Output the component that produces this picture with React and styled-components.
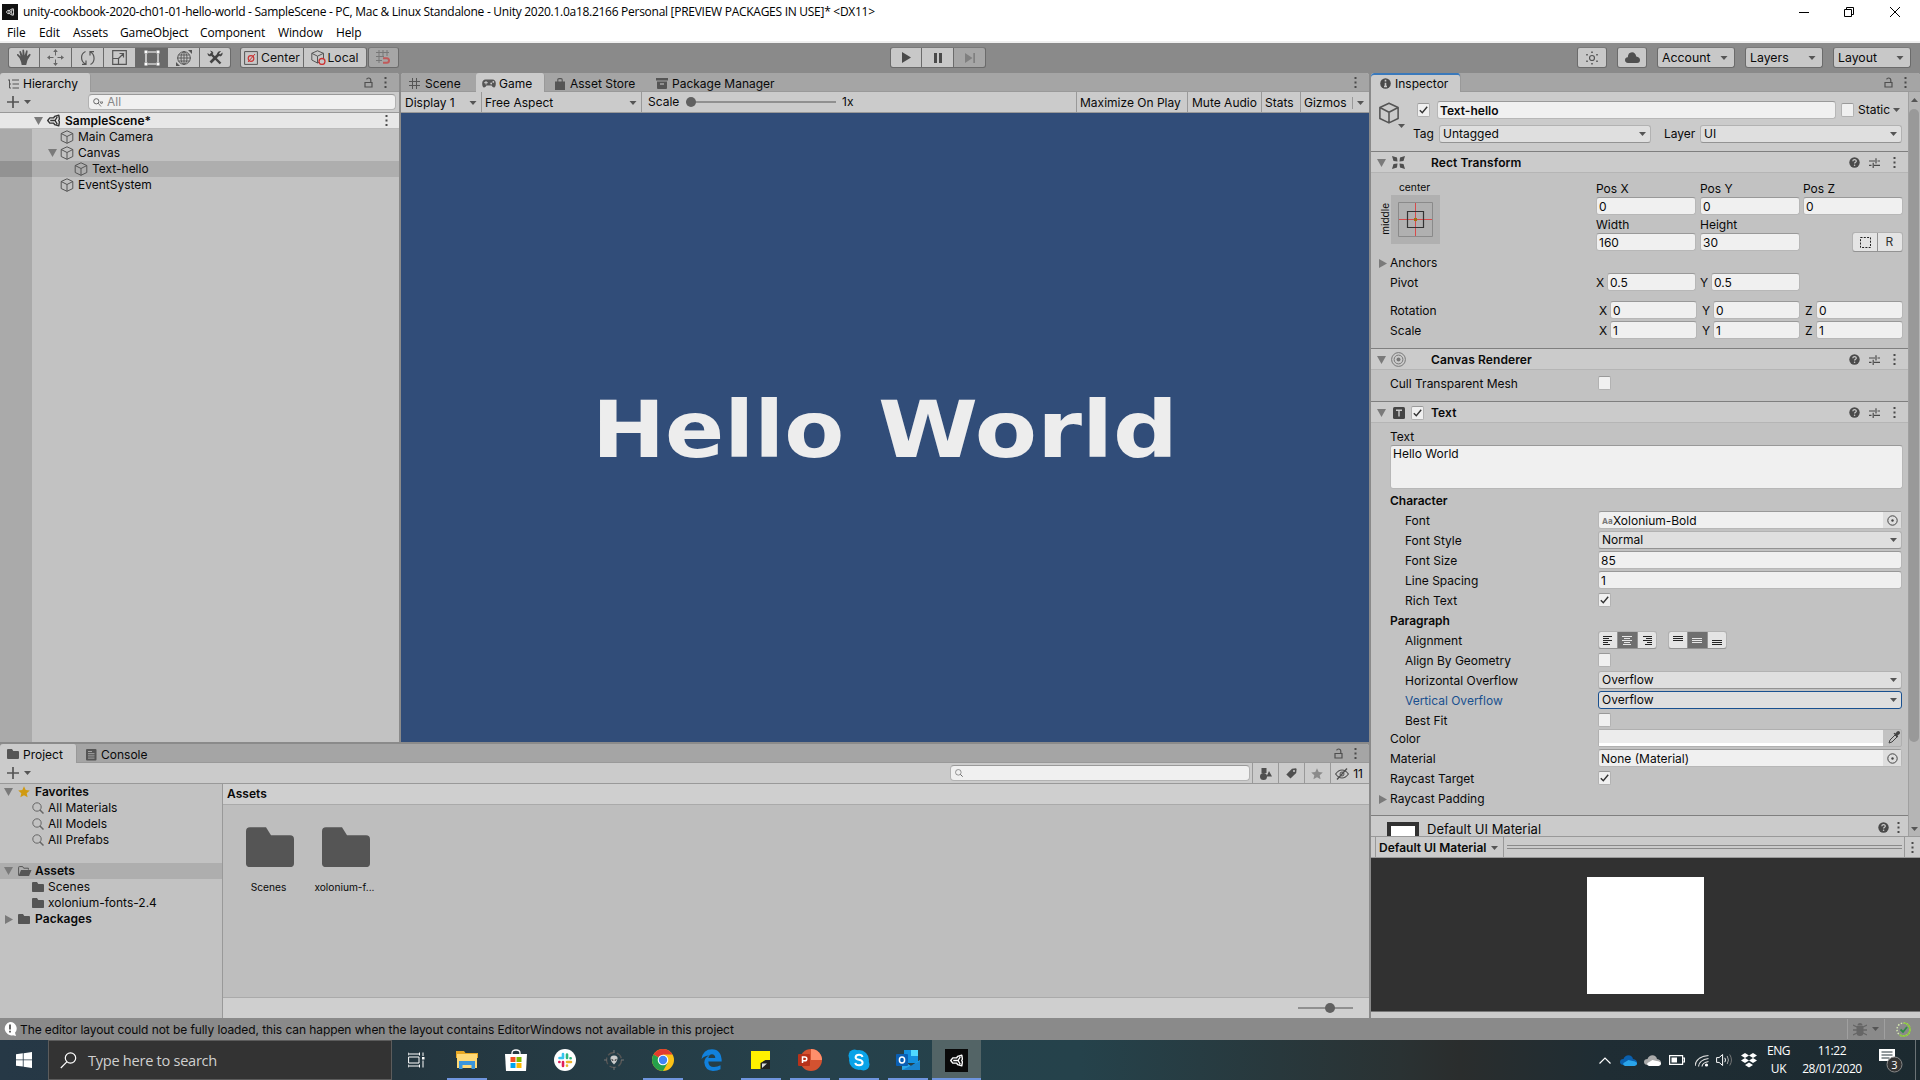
import React from "react";
import styled, { createGlobalStyle, css } from "styled-components";

const Global = createGlobalStyle`
  * { box-sizing: border-box; }
  html, body { margin: 0; padding: 0; overflow: hidden; }
  body { font: 12px/16px Inter, "Liberation Sans", sans-serif; color: #090909; background: #8a8a8a; }
  svg { display: block; flex: none; }
`;

const C = {
  icon: "#555",
  line: "#999",
  bar: "#cbcbcb",
  body: "#c2c2c2",
  dark: "#8a8a8a",
};

/* ---------- layout ---------- */
const Window = styled.div`
  width: 1920px;
  height: 1080px;
  display: flex;
  flex-direction: column;
  overflow: hidden;
  white-space: nowrap;
  cursor: default;
`;
const Row = styled.div`
  display: flex;
  align-items: center;
`;
const Push = styled.div`
  flex: 1;
`;
const Gap = styled.div`
  flex: none;
  width: ${(p) => p.$w}px;
`;
const Space = styled.div`
  flex: none;
  height: ${(p) => p.$h}px;
`;
const Cell = styled.div`
  flex: none;
  width: ${(p) => p.$w}px;
  display: flex;
  align-items: center;
  color: ${(p) => p.$color || "inherit"};
`;

/* ---------- title and menu ---------- */
const TitleBar = styled(Row)`
  height: 22px;
  flex: none;
  padding: 2px 20px 0 2px;
  background: #fff;
  color: #000;
  font-family: "Open Sans", "Noto Sans", sans-serif;
  font-size: 12px;
`;
const TitleText = styled.span`
  margin-left: 5px;
  letter-spacing: -0.275px;
`;
const MenuBar = styled(Row)`
  height: 21px;
  flex: none;
  padding: 2px 0 0 7px;
  background: #fff;
  border-bottom: 2px solid #f0f0f0;
  color: #000;
  font-family: "Open Sans", "Noto Sans", sans-serif;
`;
const MenuItem = styled.span`
  width: ${(p) => p.$w}px;
  letter-spacing: -0.12px;
`;

/* ---------- main toolbar ---------- */
const MainBar = styled(Row)`
  height: 30px;
  flex: none;
  padding: 0 9px 1px 8px;
  background: ${C.dark};
`;
const ButtonGroup = styled.div`
  display: flex;
  height: 21px;
  border: 1px solid #6b6b6b;
  border-top-color: #7a7a7a;
  border-radius: 3px;
  overflow: hidden;
  background: #6b6b6b;
  gap: 1px;
`;
const ToolButton = styled.div`
  width: ${(p) => p.$w}px;
  background: ${(p) => (p.$on ? "#6a6a6a" : p.$off ? "#a6a6a6" : "#c8c8c8")};
  display: flex;
  align-items: center;
  justify-content: center;
  gap: 1px;
  font-size: 12.2px;
  color: #111;
`;
const BarDropdown = styled(Row)`
  width: 78px;
  height: 21px;
  margin-left: 10px;
  padding: 1px 6px 0 4px;
  justify-content: space-between;
  border: 1px solid #6b6b6b;
  border-top-color: #7a7a7a;
  border-radius: 3px;
  background: #c8c8c8;
  font-size: 12.3px;
`;

/* ---------- docks ---------- */
const Workspace = styled.div`
  height: 945px;
  flex: none;
  display: flex;
  gap: 2px;
  background: ${C.dark};
`;
const LeftColumn = styled.div`
  width: 1369px;
  display: flex;
  flex-direction: column;
  gap: 2px;
`;
const TopDocks = styled.div`
  height: 669px;
  display: flex;
  gap: 2px;
`;
const Dock = styled.section`
  width: ${(p) => p.$w}px;
  display: flex;
  flex-direction: column;
  background: ${C.body};
  border-radius: 3px 3px 0 0;
  overflow: hidden;
`;
const TabStrip = styled.div`
  height: 19px;
  flex: none;
  display: flex;
  background: #a5a5a5;
  box-shadow: inset 0 -1px 0 ${C.line};
`;
const Tab = styled.div`
  width: ${(p) => p.$w}px;
  display: flex;
  align-items: center;
  padding: 2px 0 0 ${(p) => p.$pl}px;
  gap: ${(p) => p.$gap || 5}px;
  border-radius: 3px 3px 0 0;
  ${(p) =>
    p.$on &&
    css`
      background: ${C.bar};
      border-right: 1px solid #999;
    `}
  ${(p) =>
    p.$focus &&
    css`
      box-shadow: inset 0 2px 0 #3a79bb;
    `}
`;
const StripIcons = styled.div`
  margin-left: auto;
  display: flex;
  align-items: center;
  gap: 11px;
  padding-right: ${(p) => p.$pr}px;
`;
const DockBar = styled(Row)`
  height: 21px;
  flex: none;
  background: ${C.bar};
  border-bottom: 1px solid ${C.line};
`;
const BarCell = styled(Row)`
  width: ${(p) => p.$w}px;
  height: 20px;
  flex: none;
  padding: 1px ${(p) => p.$pr || 0}px 0 ${(p) => p.$pl || 0}px;
  justify-content: ${(p) => p.$j || "space-between"};
  ${(p) => p.$left && `border-left: 1px solid ${C.line};`}
  ${(p) => p.$right && `border-right: 1px solid ${C.line};`}
`;
const SearchBox = styled(Row)`
  width: ${(p) => p.$w}px;
  height: 16px;
  padding-left: 4px;
  gap: 4px;
  border: 1px solid #b2b2b2;
  border-top-color: #999;
  border-radius: 4px;
  background: #f0f0f0;
  color: #888;
`;
const TreeRow = styled.div`
  height: 16px;
  display: flex;
  align-items: center;
  padding-left: ${(p) => p.$pl}px;
  background: ${(p) => (p.$sel ? "#aeaeae" : "transparent")};
  font-weight: ${(p) => (p.$bold ? 600 : 400)};
  letter-spacing: ${(p) => (p.$bold ? 0.05 : 0)}px;
`;
const Gutter = styled.div`
  width: 32px;
  height: 16px;
  background: ${(p) => (p.$sel ? "#929292" : "#aaa")};
`;
const HierRow = styled.div`
  height: 16px;
  display: flex;
  align-items: center;
  background: ${(p) => (p.$sel ? "#aeaeae" : "transparent")};
`;
const SceneRow = styled(HierRow)`
  padding: 0 11px 0 34px;
  background: #e7e7e7;
  border-bottom: 1px solid #bbb;
  font-weight: 600;
`;
const HierFill = styled.div`
  flex: 1;
  background: linear-gradient(90deg, #aaa 32px, ${C.body} 32px);
`;
const GameView = styled.div`
  flex: 1;
  background: #314d79;
  padding: 272px 0 0 191px;
  display: flex;
  font: 700 78px/90px "DejaVu Sans", sans-serif;
  color: #ededed;
`;
const Word = styled.span`
  display: block;
  width: ${(p) => p.$w}px;
  transform: scaleX(${(p) => p.$sx});
  transform-origin: 0 0;
`;
const Track = styled.div`
  width: ${(p) => p.$w}px;
  height: 2px;
  background: #909090;
  display: flex;
  align-items: center;
  padding-left: ${(p) => p.$at}px;
`;
const Knob = styled.div`
  width: 10px;
  height: 10px;
  flex: none;
  border-radius: 50%;
  background: #606060;
`;

/* ---------- project ---------- */
const ProjectBody = styled.div`
  height: 234px;
  display: flex;
`;
const ProjectTree = styled.div`
  width: 223px;
  border-right: 1px solid ${C.line};
  background: ${C.body};
`;
const AssetPane = styled.div`
  flex: 1;
  display: flex;
  flex-direction: column;
  background: #bebebe;
`;
const AssetHead = styled(Row)`
  height: 21px;
  padding-left: 4px;
  background: #cfcfcf;
  border-bottom: 1px solid #aaa;
  font-weight: 600;
  letter-spacing: 0.05px;
`;
const AssetGrid = styled.div`
  flex: 1;
  display: flex;
  padding: 22px 0 0 9px;
`;
const AssetItem = styled.div`
  width: 76px;
  display: flex;
  flex-direction: column;
  align-items: center;
  gap: 12px;
  font-size: 10.2px;
`;
const AssetName = styled.span`
  padding-right: 3px;
`;
const AssetFoot = styled(Row)`
  height: 21px;
  padding-right: 16px;
  justify-content: flex-end;
  background: #cfcfcf;
  border-top: 1px solid #aaa;
`;

/* ---------- inspector ---------- */
const InspectorMain = styled.div`
  height: 744px;
  display: flex;
  overflow: hidden;
`;
const InspectorBody = styled.div`
  width: 537px;
  display: flex;
  flex-direction: column;
`;
const ScrollBar = styled.div`
  flex: 1;
  display: flex;
  flex-direction: column;
  align-items: center;
  padding: 6px 1px 5px 0;
  background: #b5b5b5;
  border-left: 1px solid #a0a0a0;
`;
const ScrollThumb = styled.div`
  width: 10px;
  height: 633px;
  margin-top: 7px;
  border-radius: 5px;
  background: #999;
`;
const ObjectHead = styled.div`
  height: 59px;
  flex: none;
  display: flex;
  background: ${C.bar};
`;
const ObjectIcon = styled.div`
  width: 42px;
  padding: 10px 0 0 7px;
`;
const ObjectFields = styled.div`
  padding-top: 9px;
  display: flex;
  flex-direction: column;
  gap: 6px;
`;
const Line = styled.div`
  height: ${(p) => p.$h || 18}px;
  flex: none;
  display: flex;
  align-items: center;
  padding-top: ${(p) => p.$pt || 0}px;
`;
const Field = styled.div`
  width: ${(p) => p.$w}px;
  height: ${(p) => p.$h || 18}px;
  flex: none;
  display: flex;
  align-items: ${(p) => (p.$top ? "flex-start" : "center")};
  padding: ${(p) => (p.$top ? 0 : 1)}px 0 0 2px;
  border: 1px solid #b7b7b7;
  border-top-color: #999;
  border-radius: 3px;
  background: #f0f0f0;
  font-weight: ${(p) => (p.$bold ? 600 : 400)};
`;
const Select = styled(Row)`
  width: ${(p) => p.$w}px;
  height: 18px;
  flex: none;
  padding: 0 4px 0 3px;
  justify-content: space-between;
  border: 1px solid #b2b2b2;
  border-bottom-color: #939393;
  border-radius: 3px;
  background: #dfdfdf;
  ${(p) => p.$focus && "border-color: #19508f;"}
`;
const Check = styled.div`
  width: 13px;
  height: 14px;
  flex: none;
  display: flex;
  align-items: center;
  justify-content: center;
  border: 1px solid #b2b2b2;
  border-top-color: #999;
  border-radius: 2px;
  background: #f0f0f0;
`;
const CompHead = styled.div`
  height: 22px;
  flex: none;
  display: flex;
  align-items: center;
  padding: 1px 12px 0 6px;
  background: ${C.bar};
  border-top: 1px solid #7f7f7f;
  border-bottom: 1px solid #b5b5b5;
`;
const CompTitle = styled.span`
  flex: 1;
  font-weight: 600;
  letter-spacing: 0.1px;
`;
const CompIcon = styled.div`
  width: 34px;
  display: flex;
  align-items: center;
  gap: 6px;
  margin-left: ${(p) => p.$ml}px;
`;
const CompBody = styled.div`
  height: ${(p) => p.$h}px;
  flex: none;
  display: flex;
  flex-direction: column;
  padding-top: ${(p) => p.$pt || 0}px;
`;
const RectTop = styled.div`
  height: 73px;
  flex: none;
  display: flex;
`;
const AnchorArea = styled.div`
  width: 225px;
  display: flex;
`;
const MiddleLabel = styled.div`
  width: 20px;
  display: flex;
  padding: 5px 0 0 8px;
  align-items: center;
  justify-content: center;
  span {
    writing-mode: vertical-rl;
    transform: rotate(180deg);
    font-size: 10px;
  }
`;
const AnchorBox = styled.div`
  width: 49px;
  font-size: 10.3px;
  display: flex;
  flex-direction: column;
  align-items: center;
  line-height: 15px;
`;
const AnchorName = styled.span`
  padding-right: 2px;
`;
const RectFields = styled.div`
  display: flex;
  flex-direction: column;
`;
const Segments = styled.div`
  display: flex;
  height: ${(p) => p.$h || 18}px;
  width: ${(p) => p.$w || 59}px;
  gap: 1px;
  border: 1px solid #b2b2b2;
  border-bottom-color: #939393;
  border-radius: 3px;
  background: #939393;
  overflow: hidden;
`;
const Segment = styled.div`
  flex: 1;
  display: flex;
  align-items: center;
  justify-content: center;
  background: ${(p) => (p.$on ? "#6f6f6f" : "#e4e4e4")};
  color: ${(p) => (p.$on ? "#e8e8e8" : "#222")};
`;
const ColorField = styled.div`
  width: 304px;
  height: 18px;
  display: flex;
  align-items: stretch;
  border: 1px solid #b0b0b0;
  border-radius: 2px;
`;
const Prop = styled.div`
  height: ${(p) => p.$h || 20}px;
  flex: none;
  display: flex;
  align-items: center;
  padding: ${(p) => p.$pt || 0}px 0 0 ${(p) => p.$pl}px;
  & > ${Field}, & > ${Select}, & > ${Check}, & > ${Segments}, & > ${ColorField} {
    margin-top: -2px;
  }
`;
const PropName = styled.span`
  width: ${(p) => p.$w}px;
  flex: none;
  font-weight: ${(p) => (p.$bold ? 600 : 400)};
  color: ${(p) => (p.$focus ? "#19508f" : "inherit")};
`;
const Picker = styled.div`
  width: 18px;
  height: 16px;
  margin: -1px 0 0 auto;
  display: flex;
  align-items: center;
  justify-content: center;
  background: #dedede;
`;
const FontGlyph = styled.span`
  width: 12px;
  padding-left: 1px;
  color: #777;
  font-size: 8px;
  font-weight: 700;
`;
const Swatch = styled.div`
  width: 284px;
  background: #ececec;
  border-bottom: 3px solid #fff;
`;
const MaterialHead = styled.div`
  height: 21px;
  flex: none;
  display: flex;
  padding: 6px 8px 0 16px;
  background: ${C.bar};
  border-top: 1px solid #7f7f7f;
  overflow: hidden;
`;
const Thumb = styled.div`
  width: 32px;
  height: 14px;
  border: 4px solid #313131;
  border-bottom: 0;
  background: #fff;
`;
const MaterialName = styled.div`
  flex: 1;
  padding-left: 8px;
  font-size: 13px;
  line-height: 14px;
`;
const PreviewBar = styled(Row)`
  height: 22px;
  flex: none;
  background: ${C.bar};
  border-top: 1px solid ${C.line};
  border-bottom: 1px solid ${C.line};
  padding-left: 4px;
`;
const PreviewTitle = styled(Row)`
  width: 129px;
  height: 20px;
  padding: 1px 5px 0 3px;
  justify-content: space-between;
  border-left: 1px solid ${C.line};
  border-right: 1px solid ${C.line};
  font-weight: 600;
`;
const Grip = styled.div`
  width: 395px;
  height: 4px;
  margin: 0 2px 0 3px;
  border-top: 1px solid #8a8a8a;
  border-bottom: 1px solid #8a8a8a;
`;
const Preview = styled.div`
  height: 154px;
  flex: none;
  display: flex;
  padding: 19px 0 0 216px;
  background: #313131;
  border-bottom: 1px solid #777;
`;
const PreviewQuad = styled.div`
  width: 117px;
  height: 117px;
  background: #fff;
`;
const PreviewFoot = styled.div`
  flex: 1;
  background: ${C.bar};
`;

/* ---------- status and taskbar ---------- */
const StatusBar = styled(Row)`
  height: 22px;
  flex: none;
  padding: 0 9px 0 3px;
  background: ${C.dark};
`;
const StatusText = styled.span`
  padding-top: 2px;
  letter-spacing: -0.085px;
`;
const StatusSep = styled.div`
  width: 1px;
  height: 20px;
  background: #a0a0a0;
`;
const TaskBar = styled(Row)`
  height: 40px;
  flex: none;
  background: linear-gradient(90deg, #263846 0, #24363f 400px, #26414b 800px, #25424b 1080px, #2a3233 1400px, #2a2d2d 1460px, #1f2d34 1600px, #1c2a30 1920px);
  color: #fff;
  font-family: "Open Sans", "Noto Sans", sans-serif;
  font-size: 12px;
`;
const StartButton = styled(Row)`
  width: 48px;
  height: 40px;
  justify-content: center;
`;
const SearchTask = styled(Row)`
  width: 344px;
  height: 40px;
  padding-left: 11px;
  gap: 11px;
  background: #333;
  border: 1px solid #5c5c5c;
  color: #d0d0d0;
  font-size: 14.6px;
  letter-spacing: -0.28px;
`;
const TaskItem = styled.div`
  width: 49px;
  height: 40px;
  flex: none;
  display: flex;
  align-items: center;
  justify-content: center;
  background: ${(p) => (p.$on ? "#536466" : "transparent")};
  ${(p) => p.$run && "background: linear-gradient(#6f95de, #6f95de) center bottom / 40px 2px no-repeat;"}
  ${(p) => p.$on && "box-shadow: inset 0 -2px 0 #6f95de;"}
`;
const Tray = styled(Row)`
  margin-left: auto;
`;
const TrayText = styled.div`
  width: ${(p) => p.$w}px;
  text-align: center;
  line-height: 18px;
  font-size: 12px;
  letter-spacing: -0.4px;
`;
const TrayEnd = styled.div`
  width: 1px;
  height: 40px;
  margin-right: 4px;
  background: #6b7376;
`;

/* ---------- drawings ---------- */
const S = ({ w = 16, h = w, vb, children, ...r }) => (
  <svg width={w} height={h} viewBox={vb || `0 0 ${w} ${h}`} fill="none" {...r}>
    {children}
  </svg>
);
const Down = ({ c = "#555", w = 7 }) => (
  <S w={w} h={4} vb="0 0 7 4"><path d="M0 0h7L3.5 4z" fill={c} /></S>
);
const Open = () => <S w={9} h={8}><path d="M0 0h9L4.5 8z" fill="#7a7a7a" /></S>;
const Closed = () => <S w={8} h={9}><path d="M0 0v9l8-4.500z" fill="#7a7a7a" /></S>;
const Dots = ({ c = "#4a4a4a" }) => (
  <S w={3} h={11}><path d="M.5 0h2v2h-2zM.5 4.500h2v2h-2zM.5 9h2v2h-2z" fill={c} /></S>
);
const Lock = () => (
  <S w={9} h={11}><path d="M1 5.500h7v4.500H1zM6.800 5.500V3.200C6.800 1.800 6 1 4.600 1 3.500 1 2.800 1.500 2.600 2.300" stroke="#4f4f4f" strokeWidth="1.200" /></S>
);
const Cube = ({ s = 14, c = "#555" }) => (
  <S w={s} vb="0 0 14 14"><path d="M7 .8 12.800 3.500v7L7 13.300 1.200 10.500v-7zM1.200 3.500 7 6.500l5.800-3M7 6.500v6.800" stroke={c} strokeWidth="1" strokeLinejoin="round" /></S>
);
const Plus = () => <S w={12}><path d="M6 0v12M0 6h12" stroke="#555" strokeWidth="1.700" /></S>;
const Mag = ({ s = 12, c = "#666" }) => (
  <S w={s} vb="0 0 12 12"><circle cx="5" cy="5" r="4.200" stroke={c} /><path d="M8 8l3.500 3.500" stroke={c} strokeWidth="1.500" /></S>
);
const Unity = ({ s = 13, c = "#333", ...r }) => (
  <S w={s} vb="0 0 14 14" {...r}>
    <path d="M12.700 1.300 8.200 2.500 7.200 4.200 3 4.200.8 7 3 9.800h4.200l1 1.700 4.500 1.200L13.400 8.500 12.600 7l.8-1.500zM3.500 7h5.200M8.700 7l2.300-3.800M8.700 7l2.300 3.800" stroke={c} strokeWidth="1.500" strokeLinejoin="round" />
  </S>
);
const Folder = ({ s = 12 }) => (
  <S w={s} h={s * 0.84} vb="0 0 48 40"><path d="M0 4Q0 0 4 0h16l5 8h19q4 0 4 4v24q0 4-4 4H4q-4 0-4-4z" fill="#555" /></S>
);
const Tick = () => <S w={9} h={8}><path d="M.8 4.200 3.300 6.800 8.200.8" stroke="#333" strokeWidth="1.400" /></S>;
const Star = ({ s = 12, c }) => (
  <S w={s} vb="0 0 12 12"><path d="M6 .3l1.700 3.800 4.100.4-3.100 2.700.9 4.100L6 9.200l-3.600 2.100.9-4.100L.2 4.500l4.100-.4z" fill={c} /></S>
);
const Help = () => (
  <S w={11}><circle cx="5.500" cy="5.500" r="5.200" fill="#4a4a4a" /><path d="M3.800 4.200c0-2 3.500-2 3.500 0 0 1.100-1.700 1.200-1.700 2.400" stroke="#cbcbcb" strokeWidth="1.200" /><circle cx="5.600" cy="8.300" r=".8" fill="#cbcbcb" /></S>
);
const Preset = () => (
  <S w={11} h={10}><path d="M0 3h6M8.500 3H11M7 .3v5.200M0 7.300h2.500M5 7.300h6M4.200 4.800V10" stroke="#4a4a4a" strokeWidth="1.200" /></S>
);
const Target = () => <S w={11}><circle cx="5.500" cy="5.500" r="4.700" stroke="#444" /><circle cx="5.500" cy="5.500" r="1.200" fill="#444" /></S>;

const Hand = () => (
  <S w={16} h={17}><path d="M3.500 9 1.200 6.400q-.7-1 .3-1.400.6-.2 1.200.5L4.500 7.600 3.400 3q0-1 .7-1.100.8-.1 1 .8L6.500 6.500 6.400 1.300q.1-.9.8-.9t.9.9L8.700 6.400 10 2q.4-.9 1-.7.8.2.6 1.200L10.900 7.300 13 5.200q.7-.7 1.300-.2.6.6 0 1.400L11.500 11q-.6 2.500-1.300 5H5.700q-.3-3-2.200-7z" fill="#555" /></S>
);
const Move = () => (
  <S w={17}><path d="M8.500 0l2.300 3H6.200zM8.500 17l2.300-3H6.200zM0 8.500l3-2.300v4.600zM17 8.500l-3-2.300v4.600z" fill="#666" /><path d="M8.500 3v3.500M8.500 10.500V14M3 8.500h3.500M10.500 8.500H14" stroke="#666" /></S>
);
const Rotate = () => (
  <S w={16}><path d="M5.500 1.500C0 4 .5 11.500 5.500 14M10.500 14.500C15.500 12 15 4.500 10.500 2M2 14.400h4v-4M14 1.600h-4v4" stroke="#555" strokeWidth="1.200" /></S>
);
const ScaleIcon = () => (
  <S w={15}><path d="M.7.7h13.600v13.600H.7zM.7 8.500h5.800v5.800M6.500 8.500 11.500 3.500M7.500 3.500h4v4" stroke="#555" strokeWidth="1.200" /></S>
);
const RectIcon = () => (
  <S w={16}><path d="M2 4v8M14 4v8M4 2h8M4 14h8" stroke="#fff" strokeWidth="1.200" /><path d="M.5.500h3v3h-3zM12.500.500h3v3h-3zM.5 12.500h3v3h-3zM12.500 12.500h3v3h-3z" fill="#fff" /></S>
);
const Transform = () => (
  <S w={16}><circle cx="8" cy="8" r="6.300" stroke="#555" /><ellipse cx="8" cy="8" rx="3" ry="6.300" stroke="#555" strokeWidth=".9" /><path d="M1 8h14M8 1v14M2.500 5h11M2.500 11h11" stroke="#555" strokeWidth=".9" /><path d="M0 16v-4l4 4zM16 0v4l-4-4z" fill="#555" /></S>
);
const Tools = () => (
  <S w={16}><path d="M3.500 12.500 12 4" stroke="#444" strokeWidth="2.600" /><path d="M3.500 3.500 13.500 13.500" stroke="#444" strokeWidth="2.400" /><path d="M10 3.500q1-3 4-2.500l-2 2.500 1 1 2.500-2q.5 3-2.500 4zM6.500 3q-1-2.500-3.500-2.500l1.500 2.200-1.800 1.800L.5 3Q.5 6 3.200 6.500z" fill="#444" /></S>
);
const PivotIcon = () => (
  <S w={14}><path d="M.6.6h12.800v12.800H.6z" stroke="#555" /><circle cx="7" cy="7.500" r="2.800" stroke="#c33" strokeWidth="1.200" /><path d="M4 11 11 3" stroke="#c33" /></S>
);
const LocalIcon = () => (
  <S w={15}><path d="M6.500.8 12.500 3.300v6.500L6.500 13 .8 10V3.300zM.8 3.300l5.700 2.900 6-2.900M6.500 6.200V13" stroke="#555" /><circle cx="11" cy="11.500" r="3" fill="#c8c8c8" stroke="#c33" strokeWidth="1.300" /></S>
);
const SnapIcon = () => (
  <S w={15}><path d="M3 0v13M7 0v7M11 0v6M0 2.500h13M0 6.500h8M0 10.500h6" stroke="#777" /><path d="M7 8.200h3.700q2.300.1 2.300 2.300 0 2.200-2.300 2.300H7" stroke="#c05a5a" strokeWidth="2" /></S>
);
const FolderOpen = () => (
  <S w={14} h={11}><path d="M.6 9.500V1.400Q.6.600 1.400.6h3.300l1 1.600h4.700v1.500" stroke="#555" /><path d="M3 4h10.500L11 10H.6z" fill="#555" /></S>
);

const tabs = {
  hier: <S w={11} h={10}><path d="M0 1h2M4 1h7M1.500 1v8M1.500 5H3M4.500 5H11M1.500 9H3M4.500 9H11" stroke="#555" /></S>,
  scene: <S w={11}><path d="M3.500 0v11M7.500 0v11M0 3.500h11M0 7.500h11" stroke="#555" /></S>,
  game: <S w={14} h={9}><path d="M3.500.5h7q3.300.3 3.300 4T12 8.500Q10.500 8.500 9.500 6.500h-5Q3.500 8.500 2 8.500.2 8.200.2 4.500T3.500.5z" fill="#555" /><path d="M4 2v3.500M2.200 3.700h3.600" stroke="#cbcbcb" /><circle cx="9.200" cy="4.500" r=".9" fill="#cbcbcb" /><circle cx="11.300" cy="2.900" r=".9" fill="#cbcbcb" /></S>,
  store: <S w={10} h={12}><path d="M0 3.500h10V12H0z" fill="#555" /><path d="M2.800 5V1.800q0-1.200 1.200-1.200h2q1.200 0 1.200 1.200V5" stroke="#555" strokeWidth="1.100" /></S>,
  pack: <S w={12} h={11}><path d="M0 0h12v2.600H0z" fill="#555" /><path d="M1 3.500h10V10q0 1-1 1H2q-1 0-1-1z" fill="#555" /><path d="M4 6h4" stroke="#a5a5a5" strokeWidth="1.300" /></S>,
  console: <S w={11} h={12}><rect width="10.500" height="11.500" rx="1" fill="#555" /><path d="M2 2.500h4M2 4.700h6.500M2 6.900h6.500M2 9.100h6.500" stroke="#a5a5a5" /></S>,
  info: <S w={11}><circle cx="5.500" cy="5.500" r="5.300" fill="#4a4a4a" /><path d="M5.500 1.800v1.700M5.500 4.700v4M4 8.500h3" stroke="#cbcbcb" strokeWidth="1.600" /></S>,
};

/* ---------- panels ---------- */
const Toolbar = () => (
  <MainBar>
    <ButtonGroup>
      <ToolButton $w={30}><Hand /></ToolButton>
      <ToolButton $w={31}><Move /></ToolButton>
      <ToolButton $w={31}><Rotate /></ToolButton>
      <ToolButton $w={31}><ScaleIcon /></ToolButton>
      <ToolButton $w={31} $on><RectIcon /></ToolButton>
      <ToolButton $w={31}><Transform /></ToolButton>
      <ToolButton $w={30}><Tools /></ToolButton>
    </ButtonGroup>
    <Gap $w={9} />
    <ButtonGroup>
      <ToolButton $w={62}><PivotIcon /><Gap $w={1} />Center</ToolButton>
      <ToolButton $w={62}><LocalIcon />Local</ToolButton>
    </ButtonGroup>
    <Gap $w={1} />
    <ButtonGroup><ToolButton $w={29} $off><SnapIcon /></ToolButton></ButtonGroup>
    <Gap $w={491} />
    <ButtonGroup>
      <ToolButton $w={30}><S w={9} h={11}><path d="M0 0l9 5.500L0 11z" fill="#4a4a4a" /></S></ToolButton>
      <ToolButton $w={31}><S w={8} h={10}><path d="M0 0h3v10H0zM5 0h3v10H5z" fill="#4a4a4a" /></S></ToolButton>
      <ToolButton $w={31} $off><S w={10} h={10}><path d="M0 0l7.500 5L0 10zM8.300 0H10v10H8.300z" fill="#808080" /></S></ToolButton>
    </ButtonGroup>
    <Push />
    <ButtonGroup>
      <ToolButton $w={28}>
        <S w={14}><circle cx="7" cy="7" r="2.500" stroke="#555" strokeWidth="1.200" /><path d="M6.200.5h1.600v1.600H6.200zM6.200 12h1.600v1.600H6.200zM1.200 3h1.600v1.600H1.200zM11.200 3h1.600v1.600h-1.600zM1.200 9.400h1.600V11H1.200zM11.200 9.400h1.600V11h-1.600z" fill="#555" /></S>
      </ToolButton>
    </ButtonGroup>
    <Gap $w={10} />
    <ButtonGroup>
      <ToolButton $w={28}>
        <S w={15} h={11}><path d="M3 11q-3-.4-3-3t2.800-2.800Q3 .4 7 .2q3.600.2 4.200 4.200Q15 5 15 8t-3 3z" fill="#4f4f4f" /></S>
      </ToolButton>
    </ButtonGroup>
    {["Account", "Layers", "Layout"].map((t) => (
      <BarDropdown key={t}>{t}<Down w={8} /></BarDropdown>
    ))}
  </MainBar>
);

const Hierarchy = () => (
  <Dock $w={399}>
    <TabStrip>
      <Tab $w={91} $pl={8} $gap={4} $on>{tabs.hier}Hierarchy</Tab>
      <StripIcons $pr={12}><Lock /><Dots /></StripIcons>
    </TabStrip>
    <DockBar>
      <Gap $w={7} /><Plus /><Gap $w={5} /><Down /><Gap $w={57} />
      <SearchBox $w={308}><S w={10} h={9}><circle cx="3.300" cy="3.300" r="2.600" stroke="#666" /><path d="M5 5l3 3.500M7 4h3l-1.500 2z" stroke="#666" strokeWidth=".8" /></S>All</SearchBox>
    </DockBar>
    <SceneRow><Open /><Gap $w={4} /><Unity /><Gap $w={5} />SampleScene*<Push /><Dots /></SceneRow>
    <HierRow><Gutter /><Gap $w={28} /><Cube /><Gap $w={4} />Main Camera</HierRow>
    <HierRow><Gutter /><Gap $w={16} /><Open /><Gap $w={3} /><Cube /><Gap $w={4} />Canvas</HierRow>
    <HierRow $sel><Gutter $sel /><Gap $w={42} /><Cube /><Gap $w={4} />Text-hello</HierRow>
    <HierRow><Gutter /><Gap $w={28} /><Cube /><Gap $w={4} />EventSystem</HierRow>
    <HierFill />
  </Dock>
);

const Game = () => (
  <Dock $w={968}>
    <TabStrip>
      <Tab $w={75} $pl={8} $gap={5}>{tabs.scene}Scene</Tab>
      <Tab $w={69} $pl={6} $gap={3} $on>{tabs.game}Game</Tab>
      <Tab $w={102} $pl={10}>{tabs.store}Asset Store</Tab>
      <Tab $w={130} $pl={9} $gap={4}>{tabs.pack}Package Manager</Tab>
      <StripIcons $pr={12}><Dots /></StripIcons>
    </TabStrip>
    <DockBar>
      <BarCell $w={81} $pl={4} $pr={4} $right>Display 1<Down w={8} /></BarCell>
      <BarCell $w={160} $pl={3} $pr={4} $right>Free Aspect<Down w={8} /></BarCell>
      <Gap $w={6} /><Cell $w={38}>Scale</Cell>
      <Track $w={150} $at={0}><Knob /></Track><Gap $w={6} />1x
      <Push />
      <BarCell $w={111} $pl={3} $left>Maximize On Play</BarCell>
      <BarCell $w={74} $pl={4} $left>Mute Audio</BarCell>
      <BarCell $w={39} $pl={3} $left>Stats</BarCell>
      <BarCell $w={69} $pl={3} $pr={5} $left>Gizmos<S w={12} h={12}><path d="M.5 0v12" stroke="#999" /><path d="M5 4h7l-3.500 4z" fill="#555" /></S></BarCell>
    </DockBar>
    <GameView><Word $w={286} $sx={1.12}>Hello</Word><Word $w={300} $sx={1.163}>World</Word></GameView>
  </Dock>
);

const Project = () => (
  <Dock $w={1369}>
    <TabStrip>
      <Tab $w={77} $pl={7} $gap={4} $on><Folder />Project</Tab>
      <Tab $w={90} $pl={9} $gap={4}>{tabs.console}Console</Tab>
      <StripIcons $pr={12}><Lock /><Dots /></StripIcons>
    </TabStrip>
    <DockBar>
      <Gap $w={7} /><Plus /><Gap $w={5} /><Down /><Gap $w={919} />
      <SearchBox $w={300}><Mag s={8} /></SearchBox>
      <Push />
      <BarCell $w={26} $j="center" $left>
        <S w={12}><path d="M1.500 0h5v5h-5zM9 3l3 5.500H6.500z" fill="#4f4f4f" /><circle cx="3.500" cy="8.500" r="3.500" fill="#4f4f4f" /></S>
      </BarCell>
      <BarCell $w={26} $j="center" $pr={1} $left>
        <S w={11}><path d="M6 .8 10 .3l.6.6-.4 4L4.500 10.500.3 6.500z" fill="#4f4f4f" /><circle cx="8" cy="3" r="1" fill="#cbcbcb" /></S>
      </BarCell>
      <BarCell $w={26} $j="center" $pr={1} $left><Star c="#8b8b8b" /></BarCell>
      <BarCell $w={39} $pl={4} $pr={6} $left>
        <S w={14} h={12}><path d="M.6 6Q3.500 2 7 2t6.400 4Q10.500 10 7 10T.6 6z" stroke="#4f4f4f" strokeWidth="1.200" /><circle cx="7" cy="6" r="2" stroke="#4f4f4f" /><path d="M2 11.500 12 .5" stroke="#4f4f4f" strokeWidth="1.400" /></S>11
      </BarCell>
    </DockBar>
    <ProjectBody>
      <ProjectTree>
        <TreeRow $pl={4} $bold><Open /><Gap $w={5} /><Star c="#d09a10" /><Gap $w={5} />Favorites</TreeRow>
        {["All Materials", "All Models", "All Prefabs"].map((t) => (
          <TreeRow key={t} $pl={32}><Mag /><Gap $w={4} />{t}</TreeRow>
        ))}
        <Space $h={15} />
        <TreeRow $pl={4} $bold $sel><Open /><Gap $w={5} /><FolderOpen /><Gap $w={3} />Assets</TreeRow>
        <TreeRow $pl={32}><Folder /><Gap $w={4} />Scenes</TreeRow>
        <TreeRow $pl={32}><Folder /><Gap $w={4} />xolonium-fonts-2.4</TreeRow>
        <TreeRow $pl={5} $bold><Closed /><Gap $w={5} /><Folder /><Gap $w={5} />Packages</TreeRow>
      </ProjectTree>
      <AssetPane>
        <AssetHead>Assets</AssetHead>
        <AssetGrid>
          <AssetItem><Folder s={48} /><AssetName>Scenes</AssetName></AssetItem>
          <AssetItem><Folder s={48} /><AssetName>xolonium-f...</AssetName></AssetItem>
        </AssetGrid>
        <AssetFoot><Track $w={55} $at={27}><Knob /></Track></AssetFoot>
      </AssetPane>
    </ProjectBody>
  </Dock>
);

const HeadIcons = () => (<><Help /><Gap $w={9} /><Preset /><Gap $w={13} /><Dots /></>);
const Align = ({ rows }) => (
  <S w={10} h={11}><path d={rows} stroke="currentColor" strokeWidth="1" /></S>
);

const Inspector = () => (
  <Dock $w={549}>
    <TabStrip>
      <Tab $w={90} $pl={9} $gap={4} $on $focus>{tabs.info}Inspector</Tab>
      <StripIcons $pr={13}><Lock /><Dots /></StripIcons>
    </TabStrip>
    <InspectorMain>
      <InspectorBody>
        <ObjectHead>
          <ObjectIcon>
            <Cube s={22} />
            <Row><Gap $w={20} /><Down /></Row>
          </ObjectIcon>
          <ObjectFields>
            <Line><Gap $w={4} /><Check><Tick /></Check><Gap $w={7} /><Field $w={399} $bold>Text-hello</Field><Gap $w={5} /><Check /><Gap $w={4} /><Cell $w={35}>Static</Cell><Down /></Line>
            <Line><Cell $w={26}>Tag</Cell><Select $w={212}>Untagged<Down /></Select><Gap $w={13} /><Cell $w={36}>Layer</Cell><Select $w={202}>UI<Down /></Select></Line>
          </ObjectFields>
        </ObjectHead>

        <CompHead>
          <Open />
          <CompIcon $ml={6}><S w={13}><path d="M0 0l5 1.500L5.500 5.500 1.500 5zM13 0 8 1.500 7.500 5.500l4-.5zM0 13l5-1.500.5-4-4 .5zM13 13l-5-1.500-.5-4 4 .5z" fill="#4f4f4f" /></S></CompIcon>
          <Gap $w={5} /><CompTitle>Rect Transform</CompTitle><HeadIcons />
        </CompHead>
        <CompBody $h={175} $pt={7}>
          <RectTop>
            <AnchorArea>
              <MiddleLabel><span>middle</span></MiddleLabel>
              <AnchorBox>
                <AnchorName>center</AnchorName>
                <S w={49} h={49}>
                  <path d="M0 0h49v49H0z" fill="#b0b0b0" />
                  <path d="M7.500 7.500h34v34h-34z" stroke="#8a8a8a" />
                  <path d="M24.500 8v33M8 24.500h33" stroke="#d84a4a" />
                  <path d="M16.500 16.500h16v16h-16z" stroke="#333" strokeWidth="1.200" />
                  <path d="M23 23h3v3h-3z" fill="#a07010" />
                </S>
              </AnchorBox>
            </AnchorArea>
            <RectFields>
              <Line $h={17}><Cell $w={104}>Pos X</Cell><Cell $w={103}>Pos Y</Cell><Cell $w={60}>Pos Z</Cell></Line>
              <Line><Field $w={100}>0</Field><Gap $w={4} /><Field $w={100}>0</Field><Gap $w={3} /><Field $w={100}>0</Field></Line>
              <Line $h={18} $pt={2}><Cell $w={104}>Width</Cell><Cell $w={103}>Height</Cell></Line>
              <Line>
                <Field $w={100}>160</Field><Gap $w={4} /><Field $w={100}>30</Field><Gap $w={52} />
                <Segments $w={51} $h={20}>
                  <Segment><S w={11}><path d="M.5.500h10v10H.5z" stroke="#222" strokeDasharray="2 1.300" /></S></Segment>
                  <Segment><Cell $w={9} $color="#333">R</Cell></Segment>
                </Segments>
              </Line>
            </RectFields>
          </RectTop>
          <Prop $pl={8}><Closed /><Gap $w={3} />Anchors</Prop>
          <Prop $pl={19}><PropName $w={206}>Pivot</PropName><Cell $w={11}>X</Cell><Field $w={89}>0.5</Field><Gap $w={4} /><Cell $w={11}>Y</Cell><Field $w={89}>0.5</Field></Prop>
          <Space $h={8} />
          {[["Rotation", "0"], ["Scale", "1"]].map(([n, v]) => (
            <Prop key={n} $pl={19}>
              <PropName $w={209}>{n}</PropName>
              <Cell $w={11}>X</Cell><Field $w={87}>{v}</Field><Gap $w={5} />
              <Cell $w={11}>Y</Cell><Field $w={87}>{v}</Field><Gap $w={5} />
              <Cell $w={11}>Z</Cell><Field $w={87}>{v}</Field>
            </Prop>
          ))}
        </CompBody>

        <CompHead>
          <Open />
          <CompIcon $ml={5}><S w={15}><circle cx="7.500" cy="7.500" r="6.900" stroke="#777" /><circle cx="7.500" cy="7.500" r="4.400" stroke="#777" /><circle cx="7.500" cy="7.500" r="2" fill="#777" /></S></CompIcon>
          <Gap $w={6} /><CompTitle>Canvas Renderer</CompTitle><HeadIcons />
        </CompHead>
        <CompBody $h={31} $pt={4}>
          <Prop $pl={19}><PropName $w={208}>Cull Transparent Mesh</PropName><Check /></Prop>
        </CompBody>

        <CompHead>
          <Open />
          <CompIcon $ml={7}>
            <S w={12}><rect width="12" height="12" rx="1.500" fill="#444" /><path d="M3 3.200h6M6 3.200v6.300" stroke="#cbcbcb" strokeWidth="1.400" /></S>
            <Check><Tick /></Check>
          </CompIcon>
          <Gap $w={4} /><CompTitle>Text</CompTitle><HeadIcons />
        </CompHead>
        <CompBody $h={392} $pt={4}>
          <Prop $pl={19} $h={18} $pt={2}>Text</Prop>
          <Line $h={44}><Gap $w={19} /><Field $w={513} $h={44} $top>Hello World</Field></Line>
          <Space $h={2} />
          <Prop $pl={19}><PropName $bold>Character</PropName></Prop>
          <Prop $pl={34}>
            <PropName $w={193}>Font</PropName>
            <Field $w={304}><FontGlyph>Aa</FontGlyph>Xolonium-Bold<Picker><Target /></Picker></Field>
          </Prop>
          <Prop $pl={34}><PropName $w={193}>Font Style</PropName><Select $w={304}>Normal<Down /></Select></Prop>
          <Prop $pl={34}><PropName $w={193}>Font Size</PropName><Field $w={304}>85</Field></Prop>
          <Prop $pl={34}><PropName $w={193}>Line Spacing</PropName><Field $w={304}>1</Field></Prop>
          <Prop $pl={34}><PropName $w={193}>Rich Text</PropName><Check><Tick /></Check></Prop>
          <Prop $pl={19}><PropName $bold>Paragraph</PropName></Prop>
          <Prop $pl={34}>
            <PropName $w={193}>Alignment</PropName>
            <Segments>
              <Segment><Align rows="M0 1.500h9M0 3.500h6M0 5.500h9M0 7.500h5M0 9.500h7" /></Segment>
              <Segment $on><Align rows="M0 1.500h10M2 3.500h6M0 5.500h10M2 7.500h6M1 9.500h8" /></Segment>
              <Segment><Align rows="M1 1.500h9M4 3.500h6M1 5.500h9M5 7.500h5M3 9.500h7" /></Segment>
            </Segments>
            <Gap $w={11} />
            <Segments>
              <Segment><Align rows="M0 1.500h10M0 3.500h10M0 5.500h10" /></Segment>
              <Segment $on><Align rows="M0 3.500h10M0 5.500h10M0 7.500h10" /></Segment>
              <Segment><Align rows="M0 5.500h10M0 7.500h10M0 9.500h10" /></Segment>
            </Segments>
          </Prop>
          <Prop $pl={34}><PropName $w={193}>Align By Geometry</PropName><Check /></Prop>
          <Prop $pl={34}><PropName $w={193}>Horizontal Overflow</PropName><Select $w={304}>Overflow<Down /></Select></Prop>
          <Prop $pl={34}><PropName $w={193} $focus>Vertical Overflow</PropName><Select $w={304} $focus>Overflow<Down /></Select></Prop>
          <Prop $pl={34} $h={18} $pt={2}><PropName $w={193}>Best Fit</PropName><Check /></Prop>
          <Prop $pl={19}>
            <PropName $w={208}>Color</PropName>
            <ColorField><Swatch /><Gap $w={5} /><S w={12} h={14}><path d="M1 13l1-3 5-5 2 2-5 5z" stroke="#444" /><path d="M5.500 3.500 6.500 2.800l1 .7 1.500-2q1.500-1.200 2.500 0t0 2.500l-2 1.500.7 1-.7 1z" fill="#444" /></S></ColorField>
          </Prop>
          <Prop $pl={19}><PropName $w={208}>Material</PropName><Field $w={304}>None (Material)<Picker><Target /></Picker></Field></Prop>
          <Prop $pl={19}><PropName $w={208}>Raycast Target</PropName><Check><Tick /></Check></Prop>
          <Prop $pl={8}><Closed /><Gap $w={3} />Raycast Padding</Prop>
        </CompBody>
        <MaterialHead><Thumb /><MaterialName>Default UI Material</MaterialName><Help /><Gap $w={8} /><Dots /></MaterialHead>
      </InspectorBody>
      <ScrollBar>
        <S w={7} h={4}><path d="M0 4h7L3.500 0z" fill="#555" /></S>
        <ScrollThumb />
        <Push />
        <Down />
      </ScrollBar>
    </InspectorMain>
    <PreviewBar>
      <PreviewTitle>Default UI Material<Down /></PreviewTitle>
      <Grip />
      <BarCell $w={16} $j="center" $left><Dots /></BarCell>
    </PreviewBar>
    <Preview><PreviewQuad /></Preview>
    <PreviewFoot />
  </Dock>
);

const Status = () => (
  <StatusBar>
    <S w={14}><path d="M7 0a6.500 6.500 0 0 1 5 10.800L13 14l-3-.8A6.500 6.500 0 1 1 7 0z" fill="#fff" /><path d="M7 2.500v5M7 8.800v1.700" stroke="#333" strokeWidth="1.500" /></S>
    <Gap $w={3} /><StatusText>The editor layout could not be fully loaded, this can happen when the layout contains EditorWindows not available in this project</StatusText>
    <Push />
    <StatusSep /><Gap $w={5} />
    <S w={14} h={15}><path d="M3.500 4h7v6.500Q10.500 14 7 14T3.500 10.500zM4.500 3.500Q4.500 1 7 1t2.500 2.500z" fill="#666" /><path d="M0 3l4 2M14 3l-4 2M0 8h14M0 13l4-2M14 13l-4-2" stroke="#666" strokeWidth="1.300" /></S>
    <Gap $w={5} /><Down /><Gap $w={5} /><StatusSep /><Gap $w={11} />
    <S w={15}><circle cx="7.500" cy="7.500" r="6.500" stroke="#d5e8b0" strokeWidth="1.500" strokeDasharray="1.500 1.500" /><path d="M7.500 1a6.500 6.500 0 1 1-4 11.600" stroke="#8cc63f" strokeWidth="1.700" /><path d="M4.500 7.500 7 10l4-5" stroke="#2e8b45" strokeWidth="1.800" /></S>
  </StatusBar>
);

const Cloud = ({ a, b }) => (
  <S w={17} h={11}><path d="M4 10Q0 10 0 7t3.500-3Q5 .3 8.500.3T13 4q4 .5 4 3.500t-3 3z" fill={a} /><path d="M5 11Q2.500 10.500 3.500 8l5-3 4 1q4.300.5 4.500 2.500T14.500 11z" fill={b} /></S>
);

const Tasks = () => (
  <TaskBar>
    <StartButton><S w={16}><path d="M0 2.200 6.800 1.300v6.200H0zM7.600 1.200 16 0v7.500H7.600zM0 8.300h6.800v6.300L0 13.700zM7.600 8.300H16V16l-8.400-1.200z" fill="#fff" /></S></StartButton>
    <SearchTask>
      <S w={17}><circle cx="10.500" cy="6" r="5.200" stroke="#fff" strokeWidth="1.200" /><path d="M6.800 9.800.8 16" stroke="#fff" strokeWidth="1.200" /></S>
      Type here to search
    </SearchTask>
    <TaskItem>
      <S w={17} h={16}><path d="M0 3.500V.5M11.500 3.500V.5M0 2h11.500M.6 5h10.400v6H.6zM0 15.500v-3M11.500 15.500v-3M0 14h11.500M15 .5V4M15 8.500v7" stroke="#fff" /><path d="M14 5h2.500v2.500H14z" fill="#fff" /></S>
    </TaskItem>
    <Gap $w={1} />
    <TaskItem $run>
      <S w={22} h={20}><path d="M0 1h8l1.500 2H22v5H0z" fill="#e8a825" /><path d="M1 4h20v14H1z" fill="#ffd977" /><path d="M3 11h16v8h-3.500v-4h-9v4H3z" fill="#3a95dd" /></S>
    </TaskItem>
    <TaskItem>
      <S w={22} h={22}><path d="M7 6V4q0-3 4-3t4 3v2" stroke="#fff" strokeWidth="1.300" /><path d="M0 5h22l-1 17H1z" fill="#fff" /><path d="M5.500 8h5v5h-5z" fill="#f25022" /><path d="M11.500 8h5v5h-5z" fill="#7fba00" /><path d="M5.500 14h5v5h-5z" fill="#00a4ef" /><path d="M11.500 14h5v5h-5z" fill="#ffb900" /></S>
    </TaskItem>
    <TaskItem>
      <S w={22}><circle cx="11" cy="11" r="11" fill="#fff" /><g strokeWidth="2.600" strokeLinecap="round"><path d="M9 5v4M5.500 9H9" stroke="#36c5f0" /><path d="M13 5.500V9M16.500 9.300h.2" stroke="#2eb67d" /><path d="M13 13h4M13 16.500v.2" stroke="#ecb22e" /><path d="M9 13v4M5.300 13h.2" stroke="#e01e5a" /></g></S>
    </TaskItem>
    <TaskItem>
      <S w={20}><circle cx="10" cy="10" r="7.500" stroke="#555" strokeWidth="1.400" strokeDasharray="7 2.500" /><path d="M10 5.500q4 .2 3.500 3.500-.8 3.500-3.500 5.500-2.700-2-3.500-5.500Q6 5.700 10 5.500z" fill="#ccc" /><path d="M7.300 8.800l2.200 1.300-.5 1q-1.500-.3-1.700-2.300zM12.700 8.800l-2.200 1.300.5 1q1.500-.3 1.700-2.300z" fill="#222" /><path d="M10 0v3M10 17v3M0 10h3M17 10h3" stroke="#777" /></S>
    </TaskItem>
    <TaskItem $run>
      <S w={22}><circle cx="11" cy="11" r="11" fill="#fbc116" /><path d="M11 11 1.500 5.500A11 11 0 0 1 20.500 5.500H11z" fill="#e33b2e" /><path d="M1.500 5.500A11 11 0 0 0 11 22l4.700-8.300L11 11z" fill="#26a04b" /><circle cx="11" cy="11" r="5.300" fill="#fff" /><circle cx="11" cy="11" r="4.200" fill="#4285f4" /></S>
    </TaskItem>
    <TaskItem>
      <S w={21} h={22}><path d="M.5 10Q2 .3 11 .3 20.500.5 20.700 12.500H7.300Q7.500 18 13 18q3.500 0 6.500-1.700v4Q16.500 22 12 22 4 21.500 3.300 13.500 3.500 8.500 8 6.500 3.500 6.500.5 10zM7.400 9h6.900Q14 5.300 11 5.300T7.400 9z" fill="#1181dd" /></S>
    </TaskItem>
    <TaskItem $run>
      <S w={19} h={18}><path d="M0 0h19v18H0z" fill="#fff100" /><path d="M9.500 18v-6l5-3L19 9v9z" fill="#222" /><path d="M11 17v-4.500h5z" fill="#ddd" /></S>
    </TaskItem>
    <TaskItem $run>
      <S w={24} h={22}><circle cx="13" cy="11" r="11" fill="#d35230" /><path d="M13 0a11 11 0 0 1 11 11H13z" fill="#ff8f6b" /><rect y="5" width="12" height="12" rx="1" fill="#b7321a" /><path d="M4.500 14V8h2.300q2 .1 2 1.900t-2 1.900H4.500" stroke="#fff" strokeWidth="1.500" /></S>
    </TaskItem>
    <TaskItem $run>
      <S w={22}><circle cx="11" cy="11" r="10" fill="#0aa3e8" /><circle cx="6.500" cy="6.500" r="6" fill="#0aa3e8" /><circle cx="15.500" cy="15.500" r="6" fill="#0aa3e8" /><path d="M14.500 8Q14 5.800 11 5.800T7.600 8.200q0 2 3.400 2.600 3.600.7 3.600 2.900 0 2.400-3.500 2.500-3.400 0-3.800-2.400" stroke="#fff" strokeWidth="2" /></S>
    </TaskItem>
    <TaskItem $run>
      <S w={24} h={22}><path d="M8 1h14v13H8z" fill="#1490df" /><path d="M15 1h7v6h-7z" fill="#50d9ff" /><path d="M6 11l9 6 9-6v10H6z" fill="#28a8ea" /><path d="M6 21l18-9v9z" fill="#0f6cbd" opacity=".6" /><rect y="5" width="12" height="12" rx="1" fill="#0a5fb4" /><ellipse cx="6" cy="11" rx="2.600" ry="3" stroke="#fff" strokeWidth="1.500" /></S>
    </TaskItem>
    <TaskItem $on>
      <S w={23}><path d="M0 0h23v23H0z" fill="#0a0a0a" /><g transform="translate(5 5)"><Unity c="#fff" /></g></S>
    </TaskItem>
    <Tray>
      <S w={12} h={7}><path d="M.5 6.500 6 1l5.500 5.500" stroke="#fff" strokeWidth="1.200" /></S><Gap $w={9} />
      <Cloud a="#0a60ae" b="#2aa4ea" /><Gap $w={7} />
      <Cloud a="#aaa" b="#fff" /><Gap $w={8} />
      <S w={16} h={10}><path d="M.6.600h13v8.800H.6zM14 3h1.400v4H14" stroke="#fff" strokeWidth="1.200" /><path d="M2.500 2.500H8v5H2.500z" fill="#fff" /></S><Gap $w={10} />
      <S w={14}><path d="M0 13Q1 3.500 13.500 2.500M3.500 13.500Q4 7 13.500 5.500M7 13.500Q7.500 9.500 13.500 8.500" stroke="#ddd" strokeWidth="1.200" /><circle cx="11.500" cy="12" r="1.600" fill="#fff" /></S><Gap $w={7} />
      <S w={17} h={14}><path d="M.6 4.600h2.500L6.600 1.500v11L3.100 9.400H.6z" stroke="#fff" /><path d="M8.800 4.800q1.400 2.200 0 4.400" stroke="#fff" /><path d="M11.200 3q2.500 4 0 8" stroke="#aaa" /><path d="M13.700 1.500q3.500 5.500 0 11" stroke="#777" /></S><Gap $w={8} />
      <S w={16} h={15}><path d="M4 0l4 2.500L4 5 0 2.500zM12 0l4 2.500L12 5 8 2.500zM4 5l4 2.500L4 10 0 7.500zM12 5l4 2.500L12 10 8 7.500zM8 9.500l4 2.500-4 2.500L4 12z" fill="#fff" /></S><Gap $w={8} />
      <TrayText $w={27}>ENG<br />UK</TrayText><Gap $w={8} />
      <TrayText $w={64}>11:22<br />28/01/2020</TrayText><Gap $w={15} />
      <S w={24} h={26}><path d="M0 2h16v12h-4l-3.500 4v-4H0z" fill="#fff" /><path d="M2.500 5h11M2.500 8h11M2.500 11h8" stroke="#26343a" /><circle cx="15.500" cy="17.500" r="7.500" fill="#333" stroke="#888" /><text x="15.500" y="21.500" fontSize="11" textAnchor="middle" fill="#fff">3</text></S>
      <Gap $w={12} /><TrayEnd />
    </Tray>
  </TaskBar>
);

const menu = [["File", 32], ["Edit", 34], ["Assets", 47], ["GameObject", 80], ["Component", 78], ["Window", 58], ["Help", 40]];

export default function App() {
  return (
    <Window>
      <Global />
      <TitleBar>
        <S w={16}><path d="M0 0h16v16H0z" fill="#111" /><g transform="translate(4 4)"><Unity s={8} c="#fff" /></g></S>
        <TitleText>unity-cookbook-2020-ch01-01-hello-world - SampleScene - PC, Mac &amp; Linux Standalone - Unity 2020.1.0a18.2166 Personal [PREVIEW PACKAGES IN USE]* &lt;DX11&gt;</TitleText>
        <Push />
        <S w={10} h={10}><path d="M0 5.500h10" stroke="#000" /></S><Gap $w={35} />
        <S w={10} h={10}><path d="M.5 2.500h7v7h-7zM2.500 2.500v-2h7v7h-2" stroke="#000" /></S><Gap $w={36} />
        <S w={10} h={10}><path d="M0 0l10 10M10 0 0 10" stroke="#000" /></S>
      </TitleBar>
      <MenuBar>{menu.map(([t, w]) => <MenuItem key={t} $w={w}>{t}</MenuItem>)}</MenuBar>
      <Toolbar />
      <Workspace>
        <LeftColumn>
          <TopDocks><Hierarchy /><Game /></TopDocks>
          <Project />
        </LeftColumn>
        <Inspector />
      </Workspace>
      <Status />
      <Tasks />
    </Window>
  );
}
